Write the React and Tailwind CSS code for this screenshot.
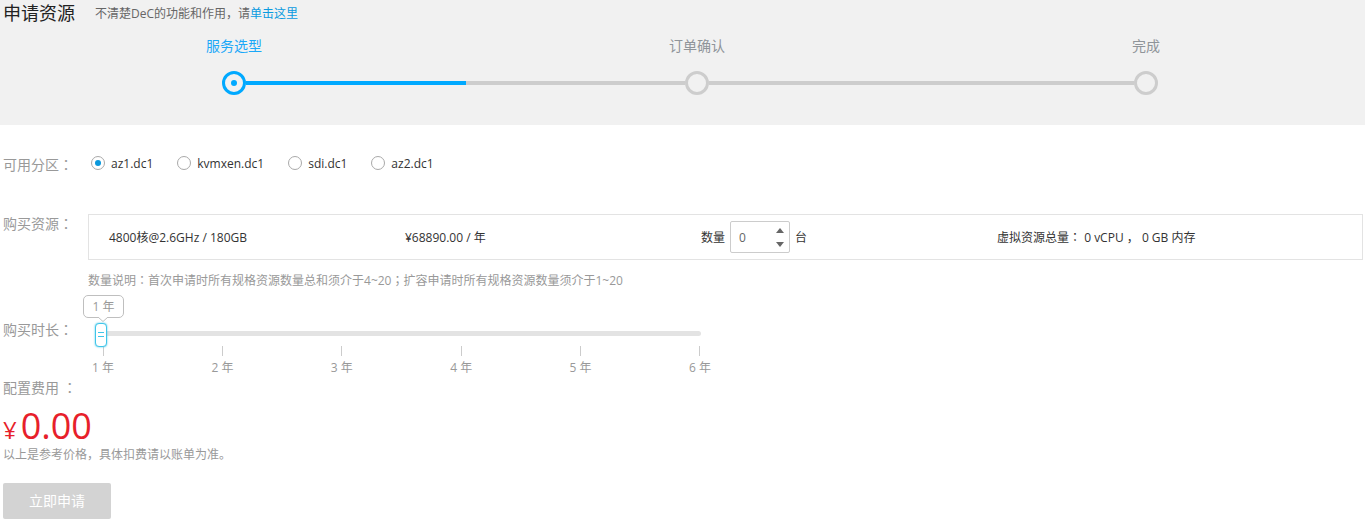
import { useState } from "react";

const zones = ["az1.dc1", "kvmxen.dc1", "sdi.dc1", "az2.dc1"];
const years = [1, 2, 3, 4, 5, 6];

// Full-width colon or semicolon centred in its em box.
function Mark({ children }) {
  return <span className="leading-none font-['Noto_Sans_CJK_TC',sans-serif]">{children}</span>;
}

function Step({ label, active }) {
  return (
    <li className="flex w-6 flex-none flex-col items-center gap-[15px]">
      <span
        className={`text-sm leading-5 whitespace-nowrap ${active ? "text-[#1ba8f8]" : "text-[#8f9499]"}`}
      >
        {label}
      </span>
      <span
        className={`flex size-6 items-center justify-center rounded-full border-[3px] ${active ? "border-[#00a9ff]" : "border-[#cdcdcd]"}`}
      >
        {active && <span className="size-1.5 rounded-full bg-[#00a9ff]" />}
      </span>
    </li>
  );
}

function Header() {
  return (
    <header className="h-[125px] bg-[#f1f1f1] pt-px">
      <div className="flex items-center gap-5 pl-[3px]">
        <h1 className="text-lg leading-6 text-[#222]">申请资源</h1>
        <p className="pt-[2px] text-xs leading-5 text-[#666]">
          不清楚DeC的功能和作用，请
          <a href="#help" className="text-[#0a9be0]">
            单击这里
          </a>
        </p>
      </div>
      <ol className="mt-[11px] flex items-end pr-[207px] pl-[222px]">
        <Step label="服务选型" active />
        <li aria-hidden="true" className="mb-[10px] flex h-1 flex-[439] bg-[#cdcdcd]">
          <span className="w-1/2 bg-[#00a9ff]" />
        </li>
        <Step label="订单确认" />
        <li aria-hidden="true" className="mb-[10px] h-1 flex-[425] bg-[#cdcdcd]" />
        <Step label="完成" />
      </ol>
    </header>
  );
}

function ZoneRow() {
  const [zone, setZone] = useState(zones[0]);
  return (
    <fieldset>
      <div className="flex">
        <legend className="w-[85px] flex-none pt-[2px] text-sm leading-5 text-[#999]">
          可用分区<Mark>：</Mark>
        </legend>
        <div className="flex gap-6 pl-[3px]">
          {zones.map((z) => (
            <label key={z} className="flex h-5 items-center gap-1.5 text-xs text-[#333]">
              <input
                type="radio"
                name="zone"
                checked={zone === z}
                onChange={() => setZone(z)}
                className="grid size-3.5 appearance-none place-items-center rounded-full border border-[#a9a9a9] bg-white before:size-1.5 before:rounded-full checked:before:bg-[#0a98dc]"
              />
              <span className="pt-[2px]">{z}</span>
            </label>
          ))}
        </div>
      </div>
    </fieldset>
  );
}

function ResourceRow({ count, setCount }) {
  return (
    <section className="mt-[39px] flex">
      <h2 className="w-[85px] flex-none text-sm leading-5 text-[#999]">
        购买资源<Mark>：</Mark>
      </h2>
      <div className="flex-1">
        <div className="grid h-[46px] grid-cols-4 items-center border border-[#e3e3e3] pr-[69px] pl-5 text-xs text-[#333]">
          <span className="pt-[2px]">4800核@2.6GHz / 180GB</span>
          <span className="pt-[2px]">¥68890.00 / 年</span>
          <div className="flex items-center gap-[5px]">
            <label htmlFor="count" className="pt-[2px]">
              数量
            </label>
            <div className="flex h-8 w-[60px] rounded-xs border border-[#ccc]">
              <input
                id="count"
                type="text"
                inputMode="numeric"
                value={count}
                onChange={(e) => setCount(Number(e.target.value.replace(/\D/g, "")))}
                className="w-10 min-w-0 pt-[2px] pl-2 text-[#666] outline-none"
              />
              <div className="flex flex-1 flex-col justify-center gap-[9px]">
                <button type="button" aria-label="增加" onClick={() => setCount(count + 1)}>
                  <svg viewBox="0 0 8 5" className="mx-auto h-[5px] w-2" fill="#666">
                    <path d="M4 0 8 5H0z" />
                  </svg>
                </button>
                <button
                  type="button"
                  aria-label="减少"
                  onClick={() => setCount(Math.max(0, count - 1))}
                >
                  <svg viewBox="0 0 8 5" className="mx-auto h-[5px] w-2" fill="#666">
                    <path d="M0 0h8L4 5z" />
                  </svg>
                </button>
              </div>
            </div>
            <span className="pt-[2px]">台</span>
          </div>
          <span className="pt-[2px]">
            虚拟资源总量<Mark>：</Mark> 0 vCPU ， 0 GB 内存
          </span>
        </div>
        <p className="mt-[11px] text-xs leading-5 text-[#999]">
          数量说明<Mark>：</Mark>首次申请时所有规格资源数量总和须介于4~20<Mark>；</Mark>
          扩容申请时所有规格资源数量须介于1~20
        </p>
      </div>
    </section>
  );
}

function DurationRow() {
  const [year, setYear] = useState(1);
  return (
    <section className="mt-[29px] flex">
      <label htmlFor="duration" className="w-[85px] flex-none text-sm leading-5 text-[#999]">
        购买时长<Mark>：</Mark>
      </label>
      <div className="relative ml-[7px] w-full max-w-[606px]">
        <input
          id="duration"
          type="range"
          min="1"
          max="6"
          value={year}
          onChange={(e) => setYear(Number(e.target.value))}
          className="relative z-10 mt-px block h-6 w-full appearance-none bg-transparent [&::-webkit-slider-runnable-track]:h-[5px] [&::-webkit-slider-runnable-track]:rounded-sm [&::-webkit-slider-runnable-track]:bg-[#e3e3e3] [&::-webkit-slider-thumb]:-mt-2 [&::-webkit-slider-thumb]:h-6 [&::-webkit-slider-thumb]:w-3 [&::-webkit-slider-thumb]:appearance-none [&::-webkit-slider-thumb]:rounded [&::-webkit-slider-thumb]:border [&::-webkit-slider-thumb]:border-[#3fc5e9] [&::-webkit-slider-thumb]:bg-white [&::-webkit-slider-thumb]:bg-[linear-gradient(#3fc5e9_1px,transparent_1px,transparent_4px,#3fc5e9_4px)] [&::-webkit-slider-thumb]:bg-[length:6px_5px] [&::-webkit-slider-thumb]:bg-center [&::-webkit-slider-thumb]:bg-no-repeat [&::-webkit-slider-thumb]:shadow-[0_0_2px_#3fc5e9]"
        />
        <output
          htmlFor="duration"
          className="absolute -top-[25px] flex h-[23px] w-[41px] -translate-x-[12px] items-center justify-center rounded-[5px] border border-[#bfbfbf] bg-white text-xs text-[#999]"
          style={{ left: `${((year - 1) / 5) * 98}%` }}
        >
          {year} 年
          <svg viewBox="0 0 10 5" className="absolute top-[21px] left-[14px] h-[5px] w-[10px]">
            <path d="M0 0 5 4.5 10 0" fill="#fff" stroke="#bfbfbf" />
          </svg>
        </output>
        <ol className="mt-px -mr-5 -ml-[13px] flex justify-between text-xs text-[#999]">
          {years.map((y) => (
            <li key={y} className="flex w-[42px] flex-col items-center gap-[2px]">
              <span className="h-[10px] w-px bg-[#ccc]" />
              <span className="leading-5">{y} 年</span>
            </li>
          ))}
        </ol>
      </div>
    </section>
  );
}

export default function App() {
  const [count, setCount] = useState(0);
  return (
    <div className="bg-white pb-1 font-['Open_Sans','Noto_Sans_CJK_SC',sans-serif]">
      <Header />
      <form className="pt-7 pr-[2px] pl-[3px]" onSubmit={(e) => e.preventDefault()}>
        <ZoneRow />
        <ResourceRow count={count} setCount={setCount} />
        <DurationRow />
        <section>
          <h2 className="text-sm leading-5 text-[#999]">
            配置费用 <Mark>：</Mark>
          </h2>
          <p className="mt-[14px] flex items-baseline gap-1 text-[#e71f2b]">
            <span className="text-2xl leading-7">¥</span>
            <span className="text-4xl leading-7">0.00</span>
          </p>
          <p className="mt-px text-xs leading-5 text-[#999]">
            以上是参考价格，具体扣费请以账单为准。
          </p>
        </section>
        <button
          type="submit"
          className="mt-[18px] h-9 w-[108px] rounded-xs bg-[#d3d3d3] text-sm text-white"
        >
          立即申请
        </button>
      </form>
    </div>
  );
}
